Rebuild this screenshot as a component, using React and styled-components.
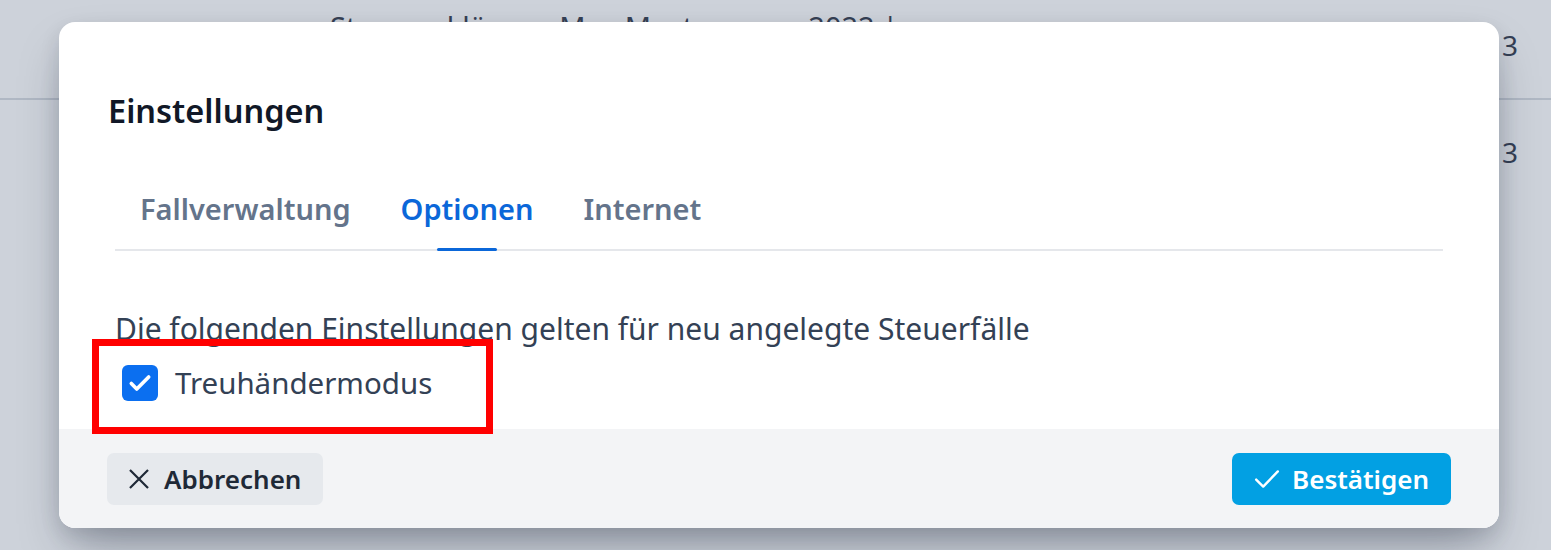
import React from 'react';
import styled, { createGlobalStyle } from 'styled-components';

const GlobalStyle = createGlobalStyle`
  html, body {
    margin: 0;
    padding: 0;
  }
  body {
    font-family: "Noto Sans", "Open Sans", sans-serif;
    color: #1e293b;
    background: #ffffff;
  }
`;

const Page = styled.div`
  position: relative;
  width: 1551px;
  height: 550px;
  overflow: hidden;
  background: #ffffff;
`;

const Table = styled.div`
  display: flex;
  flex-direction: column;
`;

const Row = styled.div`
  height: ${p => p.$height}px;
  display: grid;
  grid-template-columns: 330px 1fr 49px;
  align-items: ${p => p.$align || 'center'};
  border-bottom: ${p => (p.$line ? '2px solid #d5d9df' : 'none')};
  font-size: 28px;
  color: #1e293b;
`;

const Cell = styled.div`
  grid-column: ${p => p.$col};
  padding-top: ${p => p.$pt || 0}px;
  font-size: ${p => p.$size || 28}px;
  white-space: nowrap;
`;

const Backdrop = styled.div`
  position: absolute;
  inset: 0;
  background: rgba(100, 116, 139, 0.32);
`;

const Modal = styled.div`
  position: absolute;
  left: 59px;
  top: 22px;
  width: 1440px;
  height: 506px;
  background: #ffffff;
  border-radius: 16px;
  box-shadow: 0 25px 50px -12px rgba(15, 23, 42, 0.35), 0 8px 20px rgba(15, 23, 42, 0.12);
  display: flex;
  flex-direction: column;
  overflow: hidden;
`;

const Body = styled.div`
  flex: 1;
  padding: 66px 56px 0 56px;
  display: flex;
  flex-direction: column;
`;

const Title = styled.h2`
  margin: 0 0 0 -7px;
  font-size: 32.5px;
  line-height: 45px;
  font-weight: 600;
  color: #111827;
`;

const Tabs = styled.div`
  display: flex;
  margin-top: 56px;
  border-bottom: 2px solid #e5e7eb;
`;

const Tab = styled.div`
  position: relative;
  padding: 0 25px 20px;
  font-size: 29px;
  line-height: 40px;
  font-weight: 600;
  color: ${p => (p.$active ? '#0b67d9' : '#64748b')};

  &::after {
    content: '';
    display: ${p => (p.$active ? 'block' : 'none')};
    position: absolute;
    left: 50%;
    bottom: -2px;
    width: 60px;
    height: 3px;
    margin-left: -30px;
    border-radius: 2px;
    background: #0b67d9;
  }
`;

const Text = styled.p`
  margin: 58px 0 0;
  font-size: 30px;
  line-height: 40px;
  color: #334155;
`;

const CheckRow = styled.label`
  position: relative;
  display: flex;
  align-items: center;
  gap: 17px;
  margin-top: 15px;
  padding-left: 7px;
  font-size: 29.5px;
  line-height: 38px;
  color: #334155;
`;

const Box = styled.span`
  width: 36px;
  height: 36px;
  border-radius: 6px;
  background: #0b6ff0;
  color: #ffffff;
  display: flex;
  align-items: center;
  justify-content: center;
`;

const Marker = styled.span`
  position: absolute;
  left: -23px;
  top: -25px;
  width: 387px;
  height: 81px;
  border: 7px solid #ff0000;
  pointer-events: none;
`;

const Footer = styled.div`
  height: 99px;
  box-sizing: border-box;
  background: #f3f4f6;
  padding: 24px 48px 23px;
  display: flex;
  justify-content: space-between;
  align-items: center;
`;

const Button = styled.button`
  height: 52px;
  display: flex;
  align-items: center;
  gap: ${p => (p.$primary ? 12 : 14)}px;
  padding: ${p => (p.$primary ? '0 22px' : '0 22px 0 21px')};
  border: none;
  border-radius: 7px;
  font-family: inherit;
  font-size: 26px;
  font-weight: 600;
  background: ${p => (p.$primary ? '#02a0e3' : '#e6e9ed')};
  color: ${p => (p.$primary ? '#ffffff' : '#1f2937')};
`;

const CheckIcon = ({ size, width, wide }) => (
  <svg width={size} height={size} viewBox="0 0 24 24" fill="none" stroke="currentColor" strokeWidth={width} strokeLinecap="round" strokeLinejoin="round">
    <path d={wide ? 'M2 12.5l6.5 6.5L22 5' : 'M4 12.5l5 5L20 6.5'} />
  </svg>
);

const CloseIcon = () => (
  <svg width="22" height="22" viewBox="0 0 24 24" fill="none" stroke="currentColor" strokeWidth="2.4" strokeLinecap="square">
    <path d="M3 3l18 18M21 3L3 21" />
  </svg>
);

const App = () => {
  return (
    <>
      <GlobalStyle />
      <Page>
        <Table>
          <Row $height={98} $align="start" $line>
            <Cell $col={2} $pt={7} $size={29}>Steuererklärung Max Mustermann 2022 |</Cell>
            <Cell $col={3} $pt={26}>3</Cell>
          </Row>
          <Row $height={104}>
            <Cell $col={3}>3</Cell>
          </Row>
        </Table>
        <Backdrop />
        <Modal>
          <Body>
            <Title>Einstellungen</Title>
            <Tabs>
              <Tab>Fallverwaltung</Tab>
              <Tab $active>Optionen</Tab>
              <Tab>Internet</Tab>
            </Tabs>
            <Text>Die folgenden Einstellungen gelten für neu angelegte Steuerfälle</Text>
            <CheckRow>
              <Box>
                <CheckIcon size={26} width={3.4} />
              </Box>
              Treuhändermodus
              <Marker />
            </CheckRow>
          </Body>
          <Footer>
            <Button>
              <CloseIcon />
              Abbrechen
            </Button>
            <Button $primary>
              <CheckIcon size={26} width={2.2} wide />
              Bestätigen
            </Button>
          </Footer>
        </Modal>
      </Page>
    </>
  );
};

export default App;
